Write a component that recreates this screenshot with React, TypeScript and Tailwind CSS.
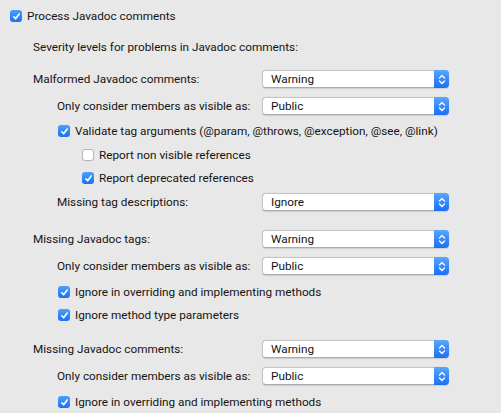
import React from "react";

const FONT = { fontFamily: "Roboto, 'Liberation Sans', sans-serif" };

function Check({ checked }: { checked: boolean }) {
  if (!checked) {
    return (
      <span className="inline-block h-[12px] w-[12px] shrink-0 rounded-[3px] border border-[#b8b8b8] bg-white shadow-[0_0.5px_0_rgba(0,0,0,0.08)]" />
    );
  }
  return (
    <span className="flex h-[12px] w-[12px] shrink-0 items-center justify-center rounded-[3px] bg-gradient-to-b from-[#4aa0fa] to-[#1a6ff5]">
      <svg width="9" height="9" viewBox="0 0 9 9" fill="none">
        <path d="M1.8 4.8 L3.6 6.8 L7.2 2" stroke="white" strokeWidth="1.6" strokeLinecap="round" strokeLinejoin="round" />
      </svg>
    </span>
  );
}

function CheckRow({ checked, label, indent, mt }: { checked: boolean; label: string; indent: string; mt: string }) {
  return (
    <div className={`flex h-[18px] items-center gap-[5px] whitespace-nowrap ${indent} ${mt}`}>
      <Check checked={checked} />
      <span className="pt-[2px]">{label}</span>
    </div>
  );
}

function Select({ value }: { value: string }) {
  return (
    <div className="flex h-[18px] w-[187px] items-stretch rounded-[4px] border border-[#c4c4c4] border-b-[#ababab] bg-white shadow-[0_0.5px_1px_rgba(0,0,0,0.12)]">
      <span className="flex flex-1 items-center pl-[8px] pt-[1px] leading-none">{value}</span>
      <span className="-my-px -mr-px flex w-[15px] items-center justify-center rounded-r-[4px] bg-gradient-to-b from-[#58a6fb] to-[#1b6ff6]">
        <svg width="8" height="11" viewBox="0 0 8 11" fill="none">
          <path d="M1.5 4 L4 1.5 L6.5 4" stroke="white" strokeWidth="1.3" strokeLinecap="round" strokeLinejoin="round" />
          <path d="M1.5 7 L4 9.5 L6.5 7" stroke="white" strokeWidth="1.3" strokeLinecap="round" strokeLinejoin="round" />
        </svg>
      </span>
    </div>
  );
}

function SelectRow({ label, value, indent, mt }: { label: string; value: string; indent: string; mt: string }) {
  return (
    <div className={`flex h-[18px] items-center whitespace-nowrap ${mt}`}>
      <span className={`w-[262px] shrink-0 pt-[2px] ${indent}`}>{label}</span>
      <Select value={value} />
    </div>
  );
}

export default function App() {
  return (
    <div className="h-[413px] w-[501px] overflow-hidden bg-[#e8e8e8] pt-[7px] text-[11.75px] text-[#141414]" style={FONT}>
      <CheckRow checked label="Process Javadoc comments" indent="pl-[10px]" mt="" />
      <div className="mt-[13px] flex h-[18px] items-center pl-[33px] pt-[2px]">Severity levels for problems in Javadoc comments:</div>

      <SelectRow label="Malformed Javadoc comments:" value="Warning" indent="pl-[33px]" mt="mt-[14px]" />
      <SelectRow label="Only consider members as visible as:" value="Public" indent="pl-[57px]" mt="mt-[9px]" />
      <CheckRow checked label="Validate tag arguments (@param, @throws, @exception, @see, @link)" indent="pl-[58px]" mt="mt-[7px]" />
      <CheckRow checked={false} label="Report non visible references" indent="pl-[82px]" mt="mt-[6px]" />
      <CheckRow checked label="Report deprecated references" indent="pl-[82px]" mt="mt-[5px]" />
      <SelectRow label="Missing tag descriptions:" value="Ignore" indent="pl-[57px]" mt="mt-[6px]" />

      <SelectRow label="Missing Javadoc tags:" value="Warning" indent="pl-[33px]" mt="mt-[19px]" />
      <SelectRow label="Only consider members as visible as:" value="Public" indent="pl-[57px]" mt="mt-[9px]" />
      <CheckRow checked label="Ignore in overriding and implementing methods" indent="pl-[58px]" mt="mt-[8px]" />
      <CheckRow checked label="Ignore method type parameters" indent="pl-[58px]" mt="mt-[5px]" />

      <SelectRow label="Missing Javadoc comments:" value="Warning" indent="pl-[33px]" mt="mt-[16px]" />
      <SelectRow label="Only consider members as visible as:" value="Public" indent="pl-[57px]" mt="mt-[9px]" />
      <CheckRow checked label="Ignore in overriding and implementing methods" indent="pl-[58px]" mt="mt-[8px]" />
    </div>
  );
}
